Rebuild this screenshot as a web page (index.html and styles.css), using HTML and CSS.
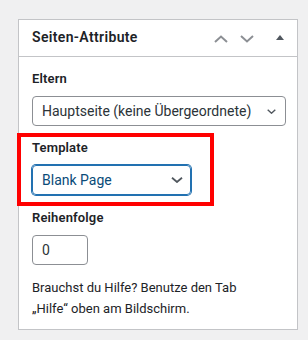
FILE: index.html
```html
<!DOCTYPE html>
<html lang="de">
<head>
<meta charset="utf-8">
<link rel="stylesheet" href="styles.css">
</head>
<body>
<div class="postbox">
  <div class="postbox-header">
    <h2 class="title">Seiten-Attribute</h2>
    <svg class="chev" width="14" height="8" viewBox="0 0 14 8"><path d="M1 7 L7 1.5 L13 7" fill="none" stroke="#8c8f94" stroke-width="2"/></svg>
    <svg class="chev chev-down" width="14" height="8" viewBox="0 0 14 8"><path d="M1 1 L7 6.5 L13 1" fill="none" stroke="#8c8f94" stroke-width="2"/></svg>
    <svg class="tri" width="8" height="5" viewBox="0 0 8 5"><path d="M0 5 L4 0 L8 5 Z" fill="#50575e"/></svg>
  </div>
  <div class="inside">
    <p class="label">Eltern</p>
    <div class="select select-wide">
      <span>Hauptseite (keine Übergeordnete)</span>
      <svg width="9" height="5" viewBox="0 0 9 5"><path d="M0.7 0.7 L4.5 4.2 L8.3 0.7" fill="none" stroke="#50575e" stroke-width="1.4"/></svg>
    </div>
    <p class="label">Template</p>
    <div class="select select-focus">
      <span>Blank Page</span>
      <svg width="12" height="6" viewBox="0 0 12 6"><path d="M1 0.8 L6 5 L11 0.8" fill="none" stroke="#50575e" stroke-width="1.8"/></svg>
    </div>
    <p class="label">Reihenfolge</p>
    <div class="input">0</div>
    <p class="help">Brauchst du Hilfe? Benutze den Tab „Hilfe“ oben am Bildschirm.</p>
  </div>
  <div class="highlight" aria-hidden="true"></div>
</div>
</body>
</html>
```
FILE: styles.css
```css
*, *::before, *::after { box-sizing: border-box; }
body {
  margin: 0;
  padding: 19px 0 0 18px;
  background: #f0f0f1;
  font-family: Roboto, "Liberation Sans", sans-serif;
  color: #1d2327;
}
.postbox {
  position: relative;
  width: 280px;
  height: 311px;
  background: #fff;
  border: 1px solid #c3c4c7;
}
.postbox-header {
  display: flex;
  align-items: center;
  height: 37px;
  border-bottom: 1px solid #c3c4c7;
  padding: 0 13px 0 13px;
}
.title {
  flex: 1;
  margin: 0;
  font-size: 14px;
  font-weight: 600;
  line-height: 1.4;
  letter-spacing: 0.35px;
}
.chev { display: block; margin-top: 1px; }
.chev-down { margin-left: 12px; }
.tri { display: block; margin-left: 22px; margin-top: -2px; }
.inside {
  display: flex;
  flex-direction: column;
  align-items: flex-start;
  padding: 13px 12px 0 13px;
}
.label {
  margin: 0 0 8px;
  font-size: 13px;
  font-weight: 600;
  line-height: 18px;
  color: #1d2327;
  letter-spacing: 0.15px;
}
.select {
  display: flex;
  align-items: center;
  justify-content: space-between;
  height: 30px;
  margin-bottom: 13px;
  border: 1px solid #8c8f94;
  border-radius: 4px;
  font-size: 14px;
  color: #2c3338;
}
.select-wide {
  width: 254px;
  padding: 0 9px 0 9px;
}
.select-focus {
  width: 159px;
  padding: 0 7px 0 9px;
  border-color: #2271b1;
  box-shadow: 0 0 0 1px #2271b1;
  color: #0a4b78;
  margin-bottom: 14px;
}
.highlight {
  position: absolute;
  left: -2px;
  top: 113px;
  width: 197px;
  height: 73px;
  border: 4px solid #f00;
}
.input {
  display: flex;
  align-items: center;
  width: 56px;
  height: 30px;
  padding-left: 9px;
  border: 1px solid #8c8f94;
  border-radius: 4px;
  font-size: 14px;
  color: #2c3338;
}
.help {
  margin: 12px 0 0;
  font-size: 13px;
  line-height: 21px;
  color: #1d2327;
  width: 240px;
}
```
